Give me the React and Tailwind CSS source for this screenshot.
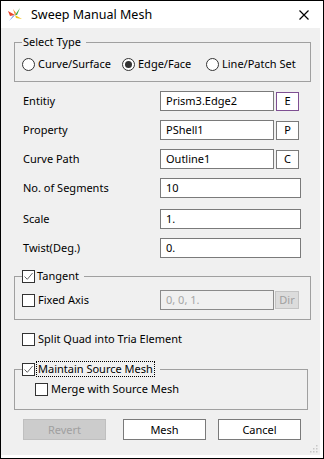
import React from 'react';

const FONT = { fontFamily: '"Noto Sans", "Open Sans", sans-serif' };

function AppIcon() {
  return (
    <svg width="16" height="16" viewBox="0 0 16 16">
      <polygon points="8,8 1,4 3,9" fill="#e8452c" />
      <polygon points="8,8 13,1 10,8" fill="#3aa843" />
      <polygon points="8,8 2,14 6,9" fill="#2c5fd6" />
      <polygon points="8,8 15,12 9,11" fill="#f2c318" />
      <polygon points="8,8 6,2 9,6" fill="#f08a24" />
    </svg>
  );
}

function CloseIcon() {
  return (
    <svg width="10" height="10" viewBox="0 0 10 10">
      <path d="M0.5 0.5 L9.5 9.5 M9.5 0.5 L0.5 9.5" stroke="#000" strokeWidth="1.2" />
    </svg>
  );
}

function Radio({ label, checked }) {
  return (
    <div className="flex items-center gap-[3px]">
      <span className="w-[13px] h-[13px] rounded-full border border-[#333] bg-white flex items-center justify-center">
        {checked && <span className="w-[7px] h-[7px] rounded-full bg-[#333]" />}
      </span>
      <span>{label}</span>
    </div>
  );
}

function Check({ checked }) {
  return (
    <span className="w-[13px] h-[13px] border border-[#333] bg-white flex items-center justify-center shrink-0">
      {checked && (
        <svg width="11" height="11" viewBox="0 0 11 11">
          <path d="M1.5 5.5 L4.3 8.3 L9.6 2" stroke="#666" strokeWidth="1" fill="none" />
        </svg>
      )}
    </span>
  );
}

// group box: border line with a caption laid over it
function Group({ caption, className = '', children }) {
  return (
    <div className={`relative border border-[#a0a0a0] ${className}`}>
      <div className="absolute -top-[9px] left-[7px] h-[16px] flex items-center bg-[#f0f0f0] pr-[5px]">
        {caption}
      </div>
      {children}
    </div>
  );
}

function Row({ label, value, btn, purple, className = '' }) {
  return (
    <div className={`flex items-center h-[20px] ${className}`}>
      <span className="w-[146px] pl-[9px]">{label}</span>
      <div className={`h-[20px] ${btn ? 'w-[114px]' : 'w-[141px]'} border border-[#7a7a7a] bg-white flex items-center px-[5px]`}>
        {value}
      </div>
      {btn && (
        <div
          className={`ml-[2px] w-[23px] h-[19px] border ${purple ? 'border-[#7e4f92]' : 'border-[#7a7a7a]'} bg-white flex items-center justify-center`}
        >
          {btn}
        </div>
      )}
    </div>
  );
}

function Grip() {
  return (
    <svg width="10" height="10" viewBox="0 0 10 10" className="absolute right-[2px] bottom-[2px]">
      {[[8, 2], [5, 5], [8, 5], [2, 8], [5, 8], [8, 8]].map(([x, y]) => (
        <rect key={`${x}-${y}`} x={x} y={y} width="1.5" height="1.5" fill="#c8c8c8" />
      ))}
    </svg>
  );
}

export default function App() {
  return (
    <div className="w-[324px] h-[459px] border border-black bg-white flex flex-col text-[11px] text-black leading-[16px]" style={FONT}>
      {/* Title bar */}
      <div className="h-[27px] flex items-center pl-[6px] pr-[14px] shrink-0">
        <AppIcon />
        <span className="ml-[8px] text-[12.5px] flex-1">Sweep Manual Mesh</span>
        <CloseIcon />
      </div>

      {/* Body */}
      <div className="relative flex-1 bg-[#f0f0f0] mr-[3px] mb-[3px] pl-[13px] pt-[14px] flex flex-col">
        <Group className="w-[297px] pt-[13px] pb-[9px]" caption={<span className="pl-[1px]">Select Type</span>}>
          <div className="flex pl-[7px]">
            <div className="w-[100px]"><Radio label="Curve/Surface" /></div>
            <div className="w-[84px]"><Radio label="Edge/Face" checked /></div>
            <Radio label="Line/Patch Set" />
          </div>
        </Group>

        <div className="flex flex-col gap-[9px] mt-[9px]">
          <Row label="Entitiy" value="Prism3.Edge2" btn="E" purple />
          <Row label="Property" value="PShell1" btn="P" />
          <Row label="Curve Path" value="Outline1" btn="C" />
          <Row label="No. of Segments" value="10" />
          <Row label="Scale" value="1." className="mt-[2px]" />
          <Row label="Twist(Deg.)" value="0." />
        </div>

        <Group
          className="w-[297px] mt-[18px] pt-[13px] pb-[9px]"
          caption={
            <span className="flex items-center gap-[2px]">
              <Check checked />
              <span>Tangent</span>
            </span>
          }
        >
          <div className="flex items-center h-[20px] pl-[7px]">
            <Check />
            <span className="ml-[3px] w-[122px]">Fixed Axis</span>
            <div className="h-[20px] w-[114px] border border-[#8a8a8a] bg-[#f0f0f0] text-[#a6a6a6] flex items-center px-[5px]">
              0, 0, 1.
            </div>
            <div className="ml-[1px] w-[24px] h-[18px] border border-[#c4c4c4] bg-[#dcdcdc] text-[#a0a0a0] flex items-center justify-center">
              Dir
            </div>
          </div>
        </Group>

        <div className="flex items-center gap-[3px] mt-[11px] pl-[8px]">
          <Check />
          <span>Split Quad into Tria Element</span>
        </div>

        <Group
          className="w-[294px] mt-[22px] pt-[11px] pb-[12px]"
          caption={
            <span className="flex items-center gap-[1px]">
              <Check checked />
              <span className="border border-dotted border-black px-[1px] leading-[14px]">Maintain Source Mesh</span>
            </span>
          }
        >
          <div className="flex items-center gap-[3px] pl-[20px]">
            <Check />
            <span>Merge with Source Mesh</span>
          </div>
        </Group>

        <div className="flex mt-[9px] pl-[9px]">
          <div className="w-[83px] h-[21px] border border-[#bfbfbf] bg-[#cccccc] text-[#a0a0a0] flex items-center justify-center">
            Revert
          </div>
          <div className="ml-[17px] w-[83px] h-[21px] border border-[#7a7a7a] bg-white flex items-center justify-center">
            Mesh
          </div>
          <div className="ml-[12px] w-[83px] h-[21px] border border-[#7a7a7a] bg-white flex items-center justify-center">
            Cancel
          </div>
        </div>
        <Grip />
      </div>
    </div>
  );
}
